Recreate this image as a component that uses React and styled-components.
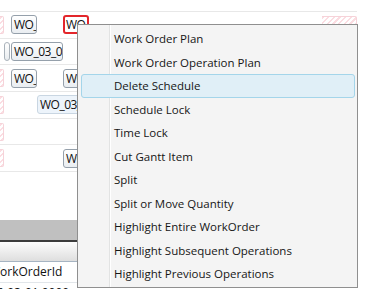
import React from "react";
import styled, { createGlobalStyle } from "styled-components";

const Global = createGlobalStyle`
  html, body { margin: 0; padding: 0; background: #ffffff; }
  body { font-family: "Open Sans", "Noto Sans", sans-serif; }
`;

const Page = styled.div`
  position: relative;
  width: 366px;
  height: 302px;
  overflow: hidden;
  background: #ffffff;
`;

const Board = styled.div`
  width: 357px;
  overflow: hidden;
  display: flex;
  flex-direction: column;
`;

const Gantt = styled.div`
  height: 220px;
  padding-top: 11px;
  box-sizing: border-box;
  display: flex;
  flex-direction: column;
`;

/* timeline columns: 0 | 4 | 11 | 37 | 63 | 89 | 322 | 357 */
const Row = styled.div`
  height: 26.7px;
  flex: none;
  border-top: 1px solid #e8e8e8;
  box-sizing: border-box;
  display: grid;
  grid-template-columns: 4px 7px 26px 26px 26px 233px 35px;
  align-items: center;
`;

const Bar = styled.div`
  grid-column: ${(p) => p.$col};
  width: ${(p) => p.$width}px;
  height: 19px;
  box-sizing: border-box;
  border-radius: 3px;
  border: 1px solid #95a0ab;
  background: linear-gradient(#ffffff, #e9edf1);
  overflow: hidden;
  white-space: nowrap;
  font-family: "Open Sans", "Noto Sans", sans-serif;
  font-size: 12px;
  letter-spacing: -0.5px;
  line-height: 17px;
  color: #111;
  padding-left: 2px;
`;

const SelectedBar = styled(Bar)`
  border: 2px solid #e3262b;
  background: #ffffff;
  line-height: 15px;
  padding-left: 1px;
`;

const LightBar = styled(Bar)`
  border-color: #c9d6e2;
  background: #edf4fb;
`;

const Pill = styled.div`
  grid-column: 2;
  width: 6px;
  height: 19px;
  box-sizing: border-box;
  border: 1px solid #a9b2ba;
  border-radius: 3px;
  background: linear-gradient(#ffffff, #e8ecef);
`;

const Stub = styled.div`
  grid-column: ${(p) => p.$col};
  width: ${(p) => p.$width}px;
  height: 18px;
  box-sizing: border-box;
  border: 1px solid #f6d3d9;
  border-left: none;
  border-radius: 0 2px 2px 0;
  background: repeating-linear-gradient(
    135deg,
    #fbdde2 0 1.5px,
    #ffffff 1.5px 4px
  );
`;

const Band = styled.div`
  height: 20px;
  background: #c0c0c0;
`;

const DarkLine = styled.div`
  height: 2px;
  background: #3c3c3c;
`;

const Header = styled.div`
  height: 20px;
  box-sizing: border-box;
  background: linear-gradient(#fdfdfd, #dedede);
  border-bottom: 1px solid #a6b4c2;
`;

const DataRow = styled.div`
  height: ${(p) => p.$height}px;
  box-sizing: border-box;
  border-bottom: ${(p) => (p.$last ? "none" : "1px solid #e2e6ea")};
  overflow: hidden;
  font-family: "Open Sans", "Noto Sans", sans-serif;
  font-size: 12px;
  line-height: 20px;
  color: #111;
  white-space: nowrap;
`;

const CellText = styled.span`
  display: inline-block;
  margin-left: ${(p) => p.$shift}px;
  margin-top: ${(p) => p.$top ?? 0}px;
`;

const Menu = styled.div`
  position: absolute;
  left: 77px;
  top: 24px;
  width: 281px;
  height: 264px;
  box-sizing: border-box;
  border: 1px solid #8f8f8f;
  padding: 2px 2px 2px 3px;
  background:
    linear-gradient(
      to right,
      transparent 31px,
      #e2e3e3 31px,
      #e2e3e3 32px,
      #ffffff 32px,
      #ffffff 33px,
      transparent 33px
    ),
    #f4f4f4;
  display: flex;
  flex-direction: column;
`;

const Item = styled.div`
  height: 23.5px;
  flex: none;
  box-sizing: border-box;
  display: flex;
  align-items: center;
  padding-left: 32px;
  font-family: "Open Sans", "Noto Sans", sans-serif;
  font-size: 11.5px;
  color: #161616;
  white-space: nowrap;
  border-radius: 3px;
  border: 1px solid ${(p) => (p.$active ? "#a4d5ea" : "transparent")};
  background: ${(p) => (p.$active ? "#e0eff7" : "transparent")};
`;

const items = [
  "Work Order Plan",
  "Work Order Operation Plan",
  "Delete Schedule",
  "Schedule Lock",
  "Time Lock",
  "Cut Gantt Item",
  "Split",
  "Split or Move Quantity",
  "Highlight Entire WorkOrder",
  "Highlight Subsequent Operations",
  "Highlight Previous Operations",
];

export default function App() {
  return (
    <Page>
      <Global />
      <Board>
        <Gantt>
          <Row>
            <Stub $col={1} $width={4} />
            <Bar $col={3} $width={26}>WO_</Bar>
            <SelectedBar $col={5} $width={26}>WO_</SelectedBar>
            <Stub $col={7} $width={35} />
          </Row>
          <Row>
            <Pill />
            <Bar $col="3 / 5" $width={52}>WO_03_0</Bar>
          </Row>
          <Row>
            <Stub $col={1} $width={4} />
            <Bar $col={3} $width={26}>WO_</Bar>
            <Bar $col={5} $width={28}>WO_</Bar>
          </Row>
          <Row>
            <Stub $col={1} $width={4} />
            <LightBar $col="4 / 7" $width={64}>WO_03_0</LightBar>
          </Row>
          <Row>
            <Stub $col={1} $width={4} />
          </Row>
          <Row>
            <Stub $col={1} $width={4} />
            <Bar $col={5} $width={28}>WO_</Bar>
          </Row>
          <Row />
        </Gantt>
        <Band />
        <DarkLine />
        <Header />
        <DataRow $height={21}>
          <CellText $shift={-11}>WorkOrderId</CellText>
        </DataRow>
        <DataRow $height={6} $last>
          <CellText $shift={-24} $top={-1}>2016-03-01 0000</CellText>
        </DataRow>
      </Board>
      <Menu>
        {items.map((t) => (
          <Item key={t} $active={t === "Delete Schedule"}>
            {t}
          </Item>
        ))}
      </Menu>
    </Page>
  );
}
